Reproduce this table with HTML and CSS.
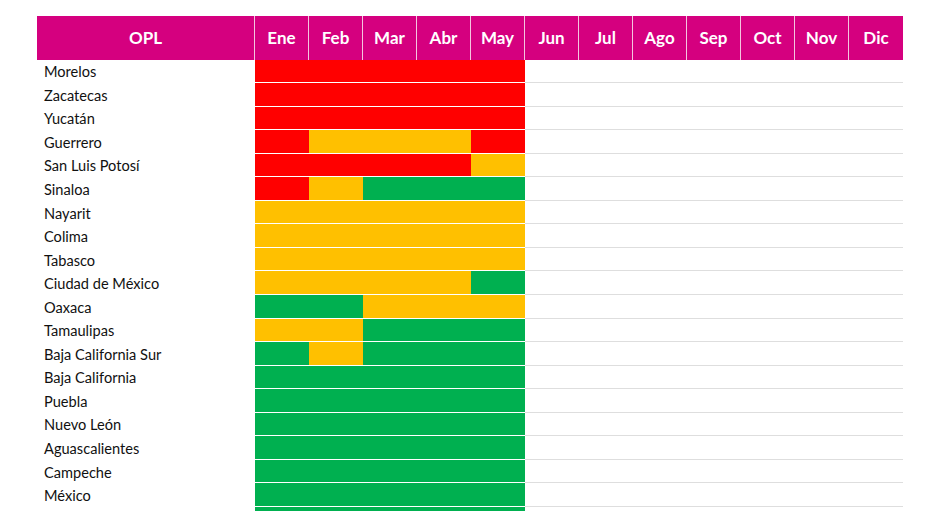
FILE: index.html
```html
<!DOCTYPE html>
<html lang="es">
<head>
<meta charset="utf-8">
<title>OPL</title>
<link rel="stylesheet" href="styles.css">
</head>
<body>
<div class="table" id="table">
  <div class="h h-opl">OPL</div>
  <div class="h">Ene</div><div class="h">Feb</div><div class="h">Mar</div><div class="h">Abr</div><div class="h">May</div><div class="h">Jun</div>
  <div class="h">Jul</div><div class="h">Ago</div><div class="h">Sep</div><div class="h">Oct</div><div class="h">Nov</div><div class="h h-last">Dic</div>
</div>
<script src="app.js"></script>
</body>
</html>
```

FILE: app.js
```js
const rows = [
  ["Morelos", "RRRRR"],
  ["Zacatecas", "RRRRR"],
  ["Yucatán", "RRRRR"],
  ["Guerrero", "RYYYR"],
  ["San Luis Potosí", "RRRRY"],
  ["Sinaloa", "RYGGG"],
  ["Nayarit", "YYYYY"],
  ["Colima", "YYYYY"],
  ["Tabasco", "YYYYY"],
  ["Ciudad de México", "YYYYG"],
  ["Oaxaca", "GGYYY"],
  ["Tamaulipas", "YYGGG"],
  ["Baja California Sur", "GYGGG"],
  ["Baja California", "GGGGG"],
  ["Puebla", "GGGGG"],
  ["Nuevo León", "GGGGG"],
  ["Aguascalientes", "GGGGG"],
  ["Campeche", "GGGGG"],
  ["México", "GGGGG"],
  ["", "GGGGG"]
];
const cls = { R: "red", Y: "yellow", G: "green" };
const t = document.getElementById("table");
for (const [name, codes] of rows) {
  const l = document.createElement("div");
  l.className = "label";
  l.textContent = name;
  t.appendChild(l);
  for (let m = 0; m < 12; m++) {
    const c = document.createElement("div");
    const code = codes[m];
    c.className = code ? "cell " + cls[code] : "cell empty";
    t.appendChild(c);
  }
}
```

FILE: styles.css
```css
html, body {
  margin: 0;
  padding: 0;
  background: #ffffff;
  overflow: hidden;
}
body {
  padding: 16px 0 0 37px;
  font-family: Lato, "Open Sans", "Liberation Sans", sans-serif;
  color: #111111;
}
.table {
  display: grid;
  grid-template-columns: 218px repeat(12, 54px);
  grid-template-rows: 43.5px;
  grid-auto-rows: 23.56px;
}
.h {
  background: #d5007f;
  color: #ffffff;
  font-weight: 700;
  font-size: 17px;
  display: flex;
  align-items: center;
  justify-content: center;
  border-right: 1px solid #f3c6df;
  box-sizing: border-box;
}
.h-last {
  border-right: none;
}
.label {
  font-size: 14.6px;
  padding-left: 7px;
  padding-top: 1px;
  display: flex;
  align-items: center;
  white-space: nowrap;
}
.cell {
  box-sizing: border-box;
  border-bottom: 1px solid #ffffff;
}
.cell.empty {
  border-bottom: 1px solid #dedede;
}
.red { background: #ff0000; }
.yellow { background: #ffc000; }
.green { background: #00b050; }
```
